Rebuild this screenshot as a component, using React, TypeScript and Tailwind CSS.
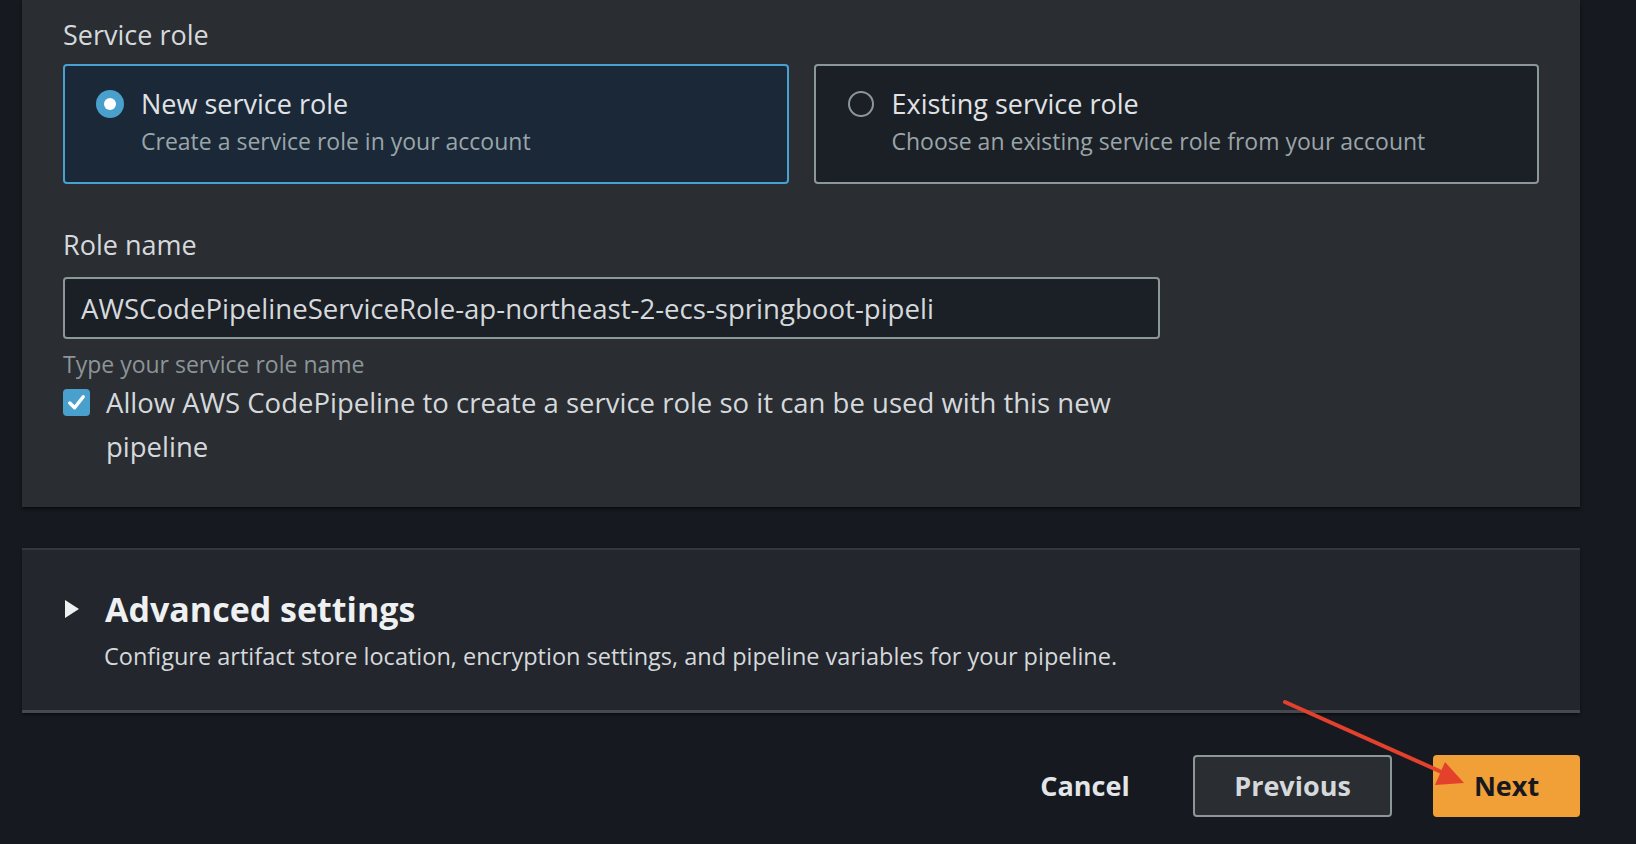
function RoleCard({ selected, title, desc }: { selected?: boolean; title: string; desc: string }) {
  return (
    <div
      className={`flex items-start rounded-[4px] border-2 pl-[31px] pt-[21px] pb-[26px] ${
        selected ? 'border-[#48a1d2] bg-[#1a2838]' : 'border-[#8c9798] bg-[#1b1f26]'
      }`}
    >
      <span className="mt-[3px] flex h-[28px] w-[28px] shrink-0 items-center justify-center">
        {selected ? (
          <span className="flex h-[28px] w-[28px] items-center justify-center rounded-full bg-[#4aa0cc]">
            <span className="h-[12px] w-[12px] rounded-full bg-white" />
          </span>
        ) : (
          <span className="h-[26px] w-[26px] rounded-full border-2 border-[#8c9798]" />
        )}
      </span>
      <div className="ml-[17px]">
        <div className="text-[27px] leading-[34px] text-[#e0e3e5]">{title}</div>
        <div className="mt-[5px] text-[23px] leading-[30px] text-[#9aa5a8]">{desc}</div>
      </div>
    </div>
  )
}

export default function App() {
  return (
    <div className="relative min-h-screen bg-[#161a20] font-['Open_Sans',sans-serif] text-[#d5d9dc]">
      <div className="ml-[22px] w-[1558px]">
        <section className="bg-[#2a2d32] px-[41px] pt-[17px] pb-[38px] shadow-[0_2px_3px_rgba(0,0,0,0.55)]">
          <div className="text-[27px] leading-[36px]">Service role</div>
          <div className="mt-[11px] grid grid-cols-2 gap-[25px]">
            <RoleCard selected title="New service role" desc="Create a service role in your account" />
            <RoleCard title="Existing service role" desc="Choose an existing service role from your account" />
          </div>

          <div className="mt-[43px] w-[1097px]">
            <div className="text-[27px] leading-[36px]">Role name</div>
            <div className="mt-[14px] flex h-[62px] items-center rounded-[4px] border-2 border-[#8c9798] bg-[#1b1f26] pl-[16px] text-[27.6px] leading-[34px]">
              AWSCodePipelineServiceRole-ap-northeast-2-ecs-springboot-pipeli
            </div>
            <div className="mt-[10px] text-[23px] leading-[30px] text-[#8c9597]">Type your service role name</div>
            <div className="mt-[2px] flex items-start gap-[16px]">
              <span className="mt-[8px] flex h-[27px] w-[27px] shrink-0 items-center justify-center rounded-[4px] bg-[#4aa0cc]">
                <svg viewBox="0 0 24 24" className="h-[23px] w-[23px]" fill="none" stroke="white" strokeWidth="3.6" strokeLinecap="round" strokeLinejoin="round">
                  <polyline points="5,12.5 10,17.5 19,6" />
                </svg>
              </span>
              <p className="text-[27.5px] leading-[44px]">
                Allow AWS CodePipeline to create a service role so it can be used with this new pipeline
              </p>
            </div>
          </div>
        </section>

        <section className="mt-[41px] border-t-2 border-b-[3px] border-t-[#34373d] border-b-[#45484f] bg-[#23262c] pl-[43px] pt-[37px] pb-[39px] shadow-[0_2px_3px_rgba(0,0,0,0.5)]">
          <div className="flex items-center">
            <svg viewBox="0 0 14 18" className="h-[18px] w-[14px]">
              <polygon points="0,0 14,9 0,18" fill="#eef0f1" />
            </svg>
            <h2 className="ml-[26px] text-[34px] font-bold leading-[44px] text-[#eef0f1]">Advanced settings</h2>
          </div>
          <p className="ml-[39px] mt-[10px] text-[23.5px] leading-[30px] text-[#d5d9dc]">
            Configure artifact store location, encryption settings, and pipeline variables for your pipeline.
          </p>
        </section>

        <div className="mt-[42px] flex items-center justify-end">
          <button className="h-[62px] w-[168px] text-[27px] font-bold text-[#e3e6e8]">Cancel</button>
          <button className="ml-[24px] h-[62px] w-[199px] rounded-[4px] border-2 border-[#8c9798] bg-[#2a2d32] text-[27px] font-bold text-[#d5d9dc]">
            Previous
          </button>
          <button className="ml-[41px] h-[62px] w-[147px] rounded-[4px] bg-[#f0a037] text-[27px] font-bold text-[#16191f]">
            Next
          </button>
        </div>
      </div>

      <svg className="pointer-events-none absolute left-0 top-0 h-[844px] w-[1636px]" viewBox="0 0 1636 844">
        <line x1="1285" y1="702" x2="1446" y2="774" stroke="#e4412c" strokeWidth="4" strokeLinecap="round" />
        <polygon points="1445,762 1464,783 1435,785" fill="#e4412c" />
      </svg>
    </div>
  )
}
